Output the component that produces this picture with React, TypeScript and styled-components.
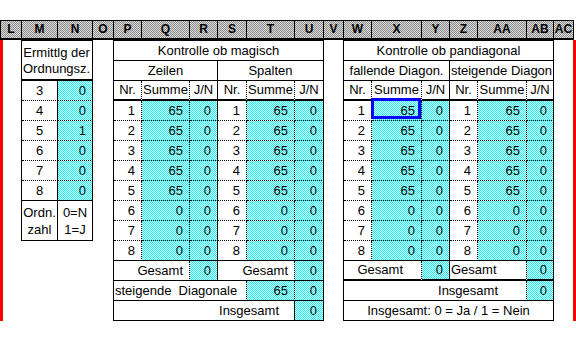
import React from 'react'
import styled, { createGlobalStyle, css } from 'styled-components'

type Line = 'solid' | 'dotted' | 'thick' | 'none'
type Align = 'left' | 'center' | 'right'

const GlobalStyle = createGlobalStyle`
    html, body {
        margin: 0;
        padding: 0;
        background: #fff;
    }
    body {
        font-family: "Liberation Sans", Arial, sans-serif;
        font-size: 13px;
        color: #000;
    }
`

const columnLetters: [string, number][] = [
    ['L', 21], ['M', 36], ['N', 35], ['O', 21], ['P', 28], ['Q', 48], ['R', 28], ['S', 29], ['T', 48],
    ['U', 29], ['V', 20], ['W', 28], ['X', 50], ['Y', 28], ['Z', 28], ['AA', 49], ['AB', 27], ['AC', 21],
]

const checkRows = [1, 2, 3, 4, 5, 6, 7, 8].map(n => ({ n, sum: n <= 5 ? 65 : 0 }))
const orderRows = [[3, 0], [4, 0], [5, 1], [6, 0], [7, 0], [8, 0]]

// 2x2 dither tile, like the 50% fill patterns of a spreadsheet cell
const dither = (base: string, dot: string) =>
    `url("data:image/svg+xml,%3Csvg xmlns='http://www.w3.org/2000/svg' width='2' height='2' shape-rendering='crispEdges'%3E` +
    `%3Crect width='2' height='2' fill='${base}'/%3E` +
    `%3Crect width='1' height='1' fill='${dot}'/%3E` +
    `%3Crect x='1' y='1' width='1' height='1' fill='${dot}'/%3E%3C/svg%3E")`

// the tile is anchored to the sheet, so neighbouring cells share one dither phase
const cyanPattern = css`
    background-color: #80ffff;
    background-image: ${dither('%2300ffff', '%23ffffff')};
    background-size: 2px 2px;
    background-position: 1px 0;
    background-attachment: fixed;
    image-rendering: pixelated;
`

const grayPattern = css`
    background-color: #b4b4b4;
    background-image: ${dither('%23dcdcdc', '%238a8a8a')};
    background-size: 2px 2px;
    background-attachment: fixed;
    image-rendering: pixelated;
`

const line = (l: Line) =>
    l === 'none' ? 'none' : l === 'thick' ? '2px solid #000' : l === 'dotted' ? '1px dotted #000' : '1px solid #000'

const Sheet = () => (
    <Page>
        <ColumnBar>
            {columnLetters.map(([name, width], i) => (
                <ColumnLabel key={name} $w={width} $last={i === columnLetters.length - 1}>{name}</ColumnLabel>
            ))}
        </ColumnBar>
        <Body>
            <PageEdge $side="left" />
            <OrderTable />
            <Gutter />
            <MagicTable />
            <Gutter />
            <PandiagonalTable />
            <PageEdge $side="right" />
        </Body>
    </Page>
)

const OrderTable = () => (
    <Table $cols="36px 35px">
        <Cell $span={2} $rows={2} $align="left" $pad={1} $bottom="thick">
            <Stack $lh={16} $top={2}><span>Ermittlg der</span><span>Ordnungsz.</span></Stack>
        </Cell>
        {orderRows.map(([n, v], i) => {
            const bottom: Line = i === orderRows.length - 1 ? 'solid' : 'dotted'
            return (
                <React.Fragment key={n}>
                    <Cell $bottom={bottom}>{n}</Cell>
                    <Cell $align="right" $fill $bottom={bottom}>{v}</Cell>
                </React.Fragment>
            )
        })}
        <Cell $rows={2} $bottom="solid">
            <Stack $lh={17}><span>Ordn.</span><span>zahl</span></Stack>
        </Cell>
        <Cell $rows={2} $bottom="solid">
            <Stack $lh={17}><span>0=N</span><span>1=J</span></Stack>
        </Cell>
    </Table>
)

const HeadRow = () => (
    <>
        {[0, 1].map(g => (
            <React.Fragment key={g}>
                <Cell $bottom="thick" $right="dotted">Nr.</Cell>
                <Cell $bottom="thick" $right="dotted">Summe</Cell>
                <Cell $bottom="thick">J/N</Cell>
            </React.Fragment>
        ))}
    </>
)

const DataRows = ({ active }: { active?: boolean }) => (
    <>
        {checkRows.map((r, i) => {
            const bottom: Line = i === checkRows.length - 1 ? 'solid' : 'dotted'
            return (
                <React.Fragment key={r.n}>
                    {[0, 1].map(g => (
                        <React.Fragment key={g}>
                            <Cell $align="right" $bottom={bottom} $right="dotted">{r.n}</Cell>
                            <Cell $align="right" $fill $bottom={bottom} $right="dotted" $active={active && g === 0 && i === 0}>
                                {r.sum}
                            </Cell>
                            <Cell $align="right" $fill $bottom={bottom}>0</Cell>
                        </React.Fragment>
                    ))}
                </React.Fragment>
            )
        })}
    </>
)

const MagicTable = () => (
    <Table $cols="28px 48px 28px 29px 48px 29px">
        <Cell $span={6} $bottom="solid">Kontrolle ob magisch</Cell>
        <Cell $span={3} $bottom="solid">Zeilen</Cell>
        <Cell $span={3} $bottom="solid">Spalten</Cell>
        <HeadRow />
        <DataRows />
        <Cell $span={2} $align="right" $bottom="solid" $right="dotted">Gesamt</Cell>
        <Cell $align="right" $fill $bottom="solid">0</Cell>
        <Cell $span={2} $align="right" $bottom="solid" $right="dotted">Gesamt</Cell>
        <Cell $align="right" $fill $bottom="solid">0</Cell>
        <Cell $span={4} $align="left" $pad={1} $bottom="solid" $right="dotted">steigende  Diagonale</Cell>
        <Cell $align="right" $fill $bottom="solid" $right="dotted">65</Cell>
        <Cell $align="right" $fill $bottom="solid">0</Cell>
        <Cell $span={5} $align="right" $pad={15} $bottom="solid">Insgesamt</Cell>
        <Cell $align="right" $fill $bottom="solid">0</Cell>
    </Table>
)

const PandiagonalTable = () => (
    <Table $cols="28px 50px 28px 28px 49px 27px">
        <Cell $span={6} $bottom="solid">Kontrolle ob pandiagonal</Cell>
        <Cell $span={3} $bottom="solid">fallende Diagon.</Cell>
        <Cell $span={3} $bottom="solid">steigende Diagon</Cell>
        <HeadRow />
        <DataRows active />
        <Cell $span={2} $align="right" $pad={18} $bottom="thick" $right="dotted">Gesamt</Cell>
        <Cell $align="right" $fill $bottom="thick">0</Cell>
        <Cell $span={2} $align="left" $pad={1} $bottom="thick" $right="dotted">Gesamt</Cell>
        <Cell $align="right" $fill $bottom="thick">0</Cell>
        <Cell $span={5} $align="right" $pad={28} $bottom="solid" $right="dotted">Insgesamt</Cell>
        <Cell $align="right" $fill $bottom="solid">0</Cell>
        <Cell $span={6} $bottom="solid">Insgesamt: 0 = Ja / 1 = Nein</Cell>
    </Table>
)

const Page = styled.div`
    width: 576px;
    padding-top: 20px;
`

const ColumnBar = styled.div`
    display: flex;
    height: 20px;
    box-sizing: border-box;
    border-top: 1px solid #000;
    border-bottom: 2px solid #000;
    width: 574px;
    ${grayPattern}
`

const ColumnLabel = styled.div<{ $w: number; $last?: boolean }>`
    flex: none;
    width: ${p => p.$w}px;
    box-sizing: border-box;
    border-left: 1px solid #000;
    border-right: ${p => (p.$last ? '1px solid #000' : 'none')};
    text-align: center;
    font-size: 12px;
    font-weight: bold;
    line-height: 17px;
`

const Body = styled.div`
    display: grid;
    grid-template-columns: 21px 72px 20px 211px 19px 211px 22px;
    align-items: start;
`

const Gutter = styled.div``

const PageEdge = styled.div<{ $side: 'left' | 'right' }>`
    width: 3px;
    height: 281px;
    background: #ff0000;
    justify-self: ${p => (p.$side === 'left' ? 'start' : 'end')};
`

const Table = styled.div<{ $cols: string }>`
    display: grid;
    grid-template-columns: ${p => p.$cols};
    grid-auto-rows: 20px;
    border-top: 1px solid #000;
    border-left: 1px solid #000;
`

const Cell = styled.div<{
    $span?: number
    $rows?: number
    $align?: Align
    $pad?: number
    $fill?: boolean
    $bottom?: Line
    $right?: Line
    $active?: boolean
}>`
    grid-column: span ${p => p.$span ?? 1};
    grid-row: span ${p => p.$rows ?? 1};
    position: relative;
    box-sizing: border-box;
    display: flex;
    align-items: center;
    justify-content: ${p => (p.$align === 'left' ? 'flex-start' : p.$align === 'right' ? 'flex-end' : 'center')};
    padding-left: ${p => (p.$align === 'left' ? p.$pad ?? 2 : 0)}px;
    padding-right: ${p => (p.$align === 'right' ? p.$pad ?? 6 : 0)}px;
    border-right: ${p => line(p.$right ?? 'solid')};
    border-bottom: ${p => line(p.$bottom ?? 'dotted')};
    white-space: pre;
    line-height: 18px;
    ${p => p.$fill && cyanPattern}

    ${p => p.$active && css`
        &::after {
            content: '';
            position: absolute;
            top: -3px;
            left: -1px;
            right: 0;
            bottom: 1px;
            border: 3px solid #0000ff;
            pointer-events: none;
            z-index: 1;
        }
    `}
`

const Stack = styled.div<{ $lh: number; $top?: number }>`
    display: flex;
    flex-flow: column nowrap;
    line-height: ${p => p.$lh}px;
    padding-top: ${p => p.$top ?? 0}px;
    align-items: inherit;
`

const App = () => (
    <>
        <GlobalStyle />
        <Sheet />
    </>
)

export default App
